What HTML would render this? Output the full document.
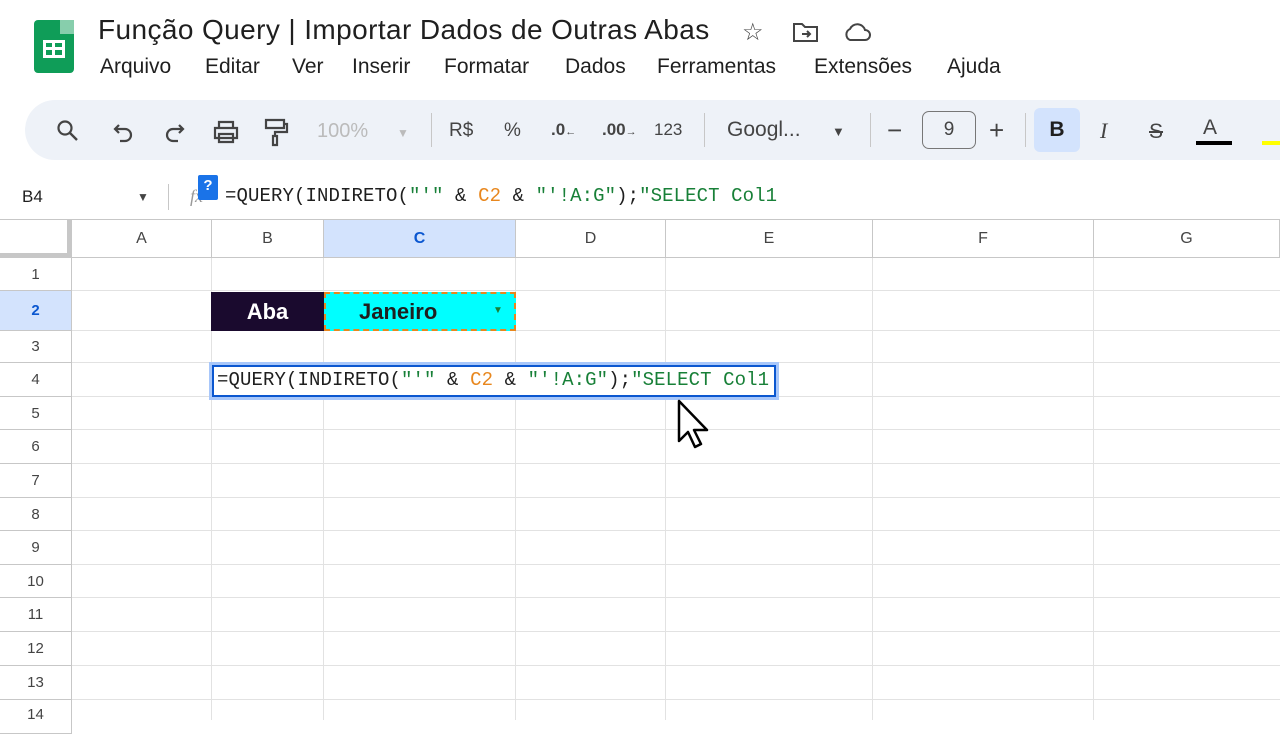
<!DOCTYPE html>
<html><head><meta charset="utf-8"><style>
*{box-sizing:border-box;margin:0;padding:0}
body{width:1280px;height:720px;overflow:hidden;background:#fff;font-family:"Liberation Sans",sans-serif;position:relative;color:#1f1f1f}
.a{position:absolute}
.mono{font-family:"Liberation Mono",monospace}
.tb{position:absolute;top:120px;font-size:19px;color:#444}
.ch{position:absolute;top:220px;height:38px;border-right:1px solid #c7c7c7;border-bottom:1px solid #c7c7c7;text-align:center;line-height:38px;font-size:16px;color:#444;background:#fff}
.rh{position:absolute;left:0;width:72px;border-right:1px solid #c7c7c7;border-bottom:1px solid #c7c7c7;text-align:center;font-size:15px;color:#444}
.hl{position:absolute;left:72px;right:0;border-bottom:1px solid #e2e2e2}
.vl{position:absolute;top:258px;bottom:0;border-right:1px solid #e2e2e2}
.fm{font-size:19px;letter-spacing:0.1px;white-space:nowrap}
</style></head><body>
<div class="a" style="left:34px;top:20px;width:40px;height:53px;background:#0f9d58;border-radius:4px"></div>
<div class="a" style="left:60px;top:20px;width:14px;height:14px;background:#87ceac"></div>
<div class="a" style="left:43px;top:40px;width:22px;height:18px;border:3px solid #fff"></div>
<div class="a" style="left:43px;top:47px;width:22px;height:3px;background:#fff"></div>
<div class="a" style="left:52px;top:40px;width:3px;height:18px;background:#fff"></div>
<div class="a" style="left:98px;top:14px;font-size:28px;letter-spacing:0.4px;color:#1f1f1f;white-space:nowrap">Função Query | Importar Dados de Outras Abas</div>
<div class="a" style="left:742px;top:18px;font-size:24px;color:#444">☆</div>
<svg class="a" style="left:792px;top:21px" width="28" height="22" viewBox="0 0 28 22"><path d="M2 3h8l3 3h12v14H2z" fill="none" stroke="#444" stroke-width="2"/><path d="M10 13h8M15 10l3 3-3 3" fill="none" stroke="#444" stroke-width="2"/></svg>
<svg class="a" style="left:842px;top:22px" width="30" height="20" viewBox="0 0 30 20"><path d="M8 18h15a5 5 0 0 0 0-10 8 8 0 0 0-15-1 6 6 0 0 0 0 11z" fill="none" stroke="#444" stroke-width="2"/></svg>
<div class="a" style="left:100px;top:55px;font-size:21px;white-space:nowrap">
<span style="position:absolute;left:0">Arquivo</span><span style="position:absolute;left:105px">Editar</span><span style="position:absolute;left:192px">Ver</span><span style="position:absolute;left:252px">Inserir</span><span style="position:absolute;left:344px">Formatar</span><span style="position:absolute;left:465px">Dados</span><span style="position:absolute;left:557px">Ferramentas</span><span style="position:absolute;left:714px">Extensões</span><span style="position:absolute;left:847px">Ajuda</span></div>
<div class="a" style="left:25px;top:100px;width:1300px;height:60px;background:#eef2f8;border-radius:30px"></div>
<svg class="a" style="left:56px;top:119px" width="24" height="24"><circle cx="9" cy="9" r="6.5" fill="none" stroke="#444" stroke-width="2.2"/><path d="M14 14l7 7" stroke="#444" stroke-width="2.4"/></svg>
<svg class="a" style="left:112px;top:121px" width="24" height="22"><path d="M7 4L3 8l4 4M3 8h10a6 6 0 0 1 0 12H8" fill="none" stroke="#444" stroke-width="2.2"/></svg>
<svg class="a" style="left:162px;top:121px" width="24" height="22"><path d="M17 4l4 4-4 4M21 8H11a6 6 0 0 0 0 12h5" fill="none" stroke="#444" stroke-width="2.2"/></svg>
<svg class="a" style="left:212px;top:119px" width="28" height="26"><path d="M7 3h14v6H7zM3 9h22v10H3zM7 15h14v8H7z" fill="#eef2f8" stroke="#444" stroke-width="2.2"/></svg>
<svg class="a" style="left:263px;top:117px" width="26" height="30"><path d="M3 3h18v8H3zM21 7h3v8H12v4M10 19h4v9h-4z" fill="none" stroke="#444" stroke-width="2.2"/></svg>
<div class="tb" style="left:317px;color:#bbb;font-size:20px">100%</div>
<div class="tb" style="left:397px;color:#bbb;font-size:12px;top:126px">▼</div>
<div class="a" style="left:431px;top:113px;width:1px;height:34px;background:#c7c7c7"></div>
<div class="tb" style="left:449px">R$</div>
<div class="tb" style="left:504px">%</div>
<div class="tb" style="left:551px;font-weight:bold;font-size:17px">.0<span style="font-size:11px">←</span></div>
<div class="tb" style="left:602px;font-weight:bold;font-size:17px">.00<span style="font-size:11px">→</span></div>
<div class="tb" style="left:654px;font-size:17px">123</div>
<div class="a" style="left:704px;top:113px;width:1px;height:34px;background:#c7c7c7"></div>
<div class="tb" style="left:727px;font-size:21px;top:118px">Googl...</div>
<div class="tb" style="left:832px;font-size:13px;top:124px">▼</div>
<div class="a" style="left:870px;top:113px;width:1px;height:34px;background:#c7c7c7"></div>
<div class="tb" style="left:887px;font-size:26px;top:115px">−</div>
<div class="a" style="left:922px;top:111px;width:54px;height:38px;border:1px solid #777;border-radius:7px;text-align:center;line-height:36px;font-size:19px;color:#444">9</div>
<div class="tb" style="left:989px;font-size:26px;top:115px">+</div>
<div class="a" style="left:1025px;top:113px;width:1px;height:34px;background:#c7c7c7"></div>
<div class="a" style="left:1034px;top:108px;width:46px;height:44px;background:#d3e3fd;border-radius:6px;text-align:center;line-height:44px;font-size:21px;font-weight:bold;color:#1f1f1f">B</div>
<div class="tb" style="left:1100px;font-size:22px;font-style:italic;font-family:'Liberation Serif',serif;top:118px">I</div>
<div class="tb" style="left:1149px;font-size:21px;text-decoration:line-through">S</div>
<div class="tb" style="left:1203px;font-size:21px;top:116px">A</div>
<div class="a" style="left:1196px;top:141px;width:36px;height:4px;background:#000"></div>
<div class="a" style="left:1262px;top:141px;width:20px;height:4px;background:#ff0"></div>
<div class="a" style="left:22px;top:187px;font-size:17px;color:#1f1f1f">B4</div>
<div class="a" style="left:137px;top:190px;font-size:12px;color:#444">▼</div>
<div class="a" style="left:168px;top:184px;width:1px;height:26px;background:#c7c7c7"></div>
<div class="a" style="left:190px;top:186px;font-size:18px;font-style:italic;color:#999;font-family:'Liberation Serif',serif">fx</div>
<div class="a" style="left:198px;top:175px;width:20px;height:25px;background:#1a73e8;border-radius:2px;color:#fff;font-size:15px;font-weight:bold;text-align:center;line-height:22px">?</div>
<div class="a mono fm" style="left:225px;top:185px">=QUERY(INDIRETO(<span style="color:#188038">"'"</span> &amp; <span style="color:#e8871e">C2</span> &amp; <span style="color:#188038">"'!A:G"</span>);<span style="color:#188038">"SELECT Col1</span></div>
<div class="a" style="left:0;top:219px;width:1280px;height:1px;background:#c7c7c7"></div>
<div class="ch" style="left:0;width:72px;border-right:5px solid #c7c7c7;border-bottom:5px solid #c7c7c7;height:38px"></div>
<div class="ch" style="left:72px;width:140px">A</div>
<div class="ch" style="left:212px;width:112px">B</div>
<div class="ch" style="left:324px;width:192px;background:#d3e3fd;color:#0b57d0;font-weight:bold">C</div>
<div class="ch" style="left:516px;width:150px">D</div>
<div class="ch" style="left:666px;width:207px">E</div>
<div class="ch" style="left:873px;width:221px">F</div>
<div class="ch" style="left:1094px;width:186px">G</div>
<div class="vl" style="left:211px"></div><div class="vl" style="left:323px"></div><div class="vl" style="left:515px"></div><div class="vl" style="left:665px"></div><div class="vl" style="left:872px"></div><div class="vl" style="left:1093px"></div>
<div class="rh" style="top:258px;height:33px;line-height:33px">1</div><div class="hl" style="top:258px;height:33px"></div>
<div class="rh" style="top:291px;height:40px;line-height:40px;background:#d3e3fd;color:#0b57d0;font-weight:bold">2</div><div class="hl" style="top:291px;height:40px"></div>
<div class="rh" style="top:331px;height:32px;line-height:32px">3</div><div class="hl" style="top:331px;height:32px"></div>
<div class="rh" style="top:363px;height:34px;line-height:34px">4</div><div class="hl" style="top:363px;height:34px"></div>
<div class="rh" style="top:397px;height:33px;line-height:33px">5</div><div class="hl" style="top:397px;height:33px"></div>
<div class="rh" style="top:430px;height:34px;line-height:34px">6</div><div class="hl" style="top:430px;height:34px"></div>
<div class="rh" style="top:464px;height:34px;line-height:34px">7</div><div class="hl" style="top:464px;height:34px"></div>
<div class="rh" style="top:498px;height:33px;line-height:33px">8</div><div class="hl" style="top:498px;height:33px"></div>
<div class="rh" style="top:531px;height:34px;line-height:34px">9</div><div class="hl" style="top:531px;height:34px"></div>
<div class="rh" style="top:565px;height:33px;line-height:33px">10</div><div class="hl" style="top:565px;height:33px"></div>
<div class="rh" style="top:598px;height:34px;line-height:34px">11</div><div class="hl" style="top:598px;height:34px"></div>
<div class="rh" style="top:632px;height:34px;line-height:34px">12</div><div class="hl" style="top:632px;height:34px"></div>
<div class="rh" style="top:666px;height:34px;line-height:34px">13</div><div class="hl" style="top:666px;height:34px"></div>
<div class="rh" style="top:700px;height:34px;line-height:30px">14</div>
<div class="a" style="left:211px;top:292px;width:113px;height:39px;background:#1a0a2e;color:#fff;font-weight:bold;font-size:22px;text-align:center;line-height:39px">Aba</div>
<div class="a" style="left:324px;top:292px;width:192px;height:39px;background:#00ffff;border:2px dashed #e8871e;font-weight:bold;font-size:22px;line-height:35px;padding-left:33px">Janeiro</div>
<div class="a" style="left:493px;top:305px;font-size:10px;color:#188038">▼</div>
<div class="a" style="left:209px;top:362px;width:570px;height:38px;border:4px solid #a8c7fa"></div>
<div class="a" style="left:212px;top:365px;width:564px;height:32px;border:2px solid #0b57d0;background:#fff"></div>
<div class="a mono fm" style="left:217px;top:369px">=QUERY(INDIRETO(<span style="color:#188038">"'"</span> &amp; <span style="color:#e8871e">C2</span> &amp; <span style="color:#188038">"'!A:G"</span>);<span style="color:#188038">"SELECT Col1</span></div>
<svg class="a" style="left:676px;top:398px" width="36" height="54" viewBox="0 0 36 54"><path d="M3 3v40l9-9 7 15 6-3-7-14h13z" fill="#fff" stroke="#000" stroke-width="2.5" stroke-linejoin="round"/></svg>
</body></html>
